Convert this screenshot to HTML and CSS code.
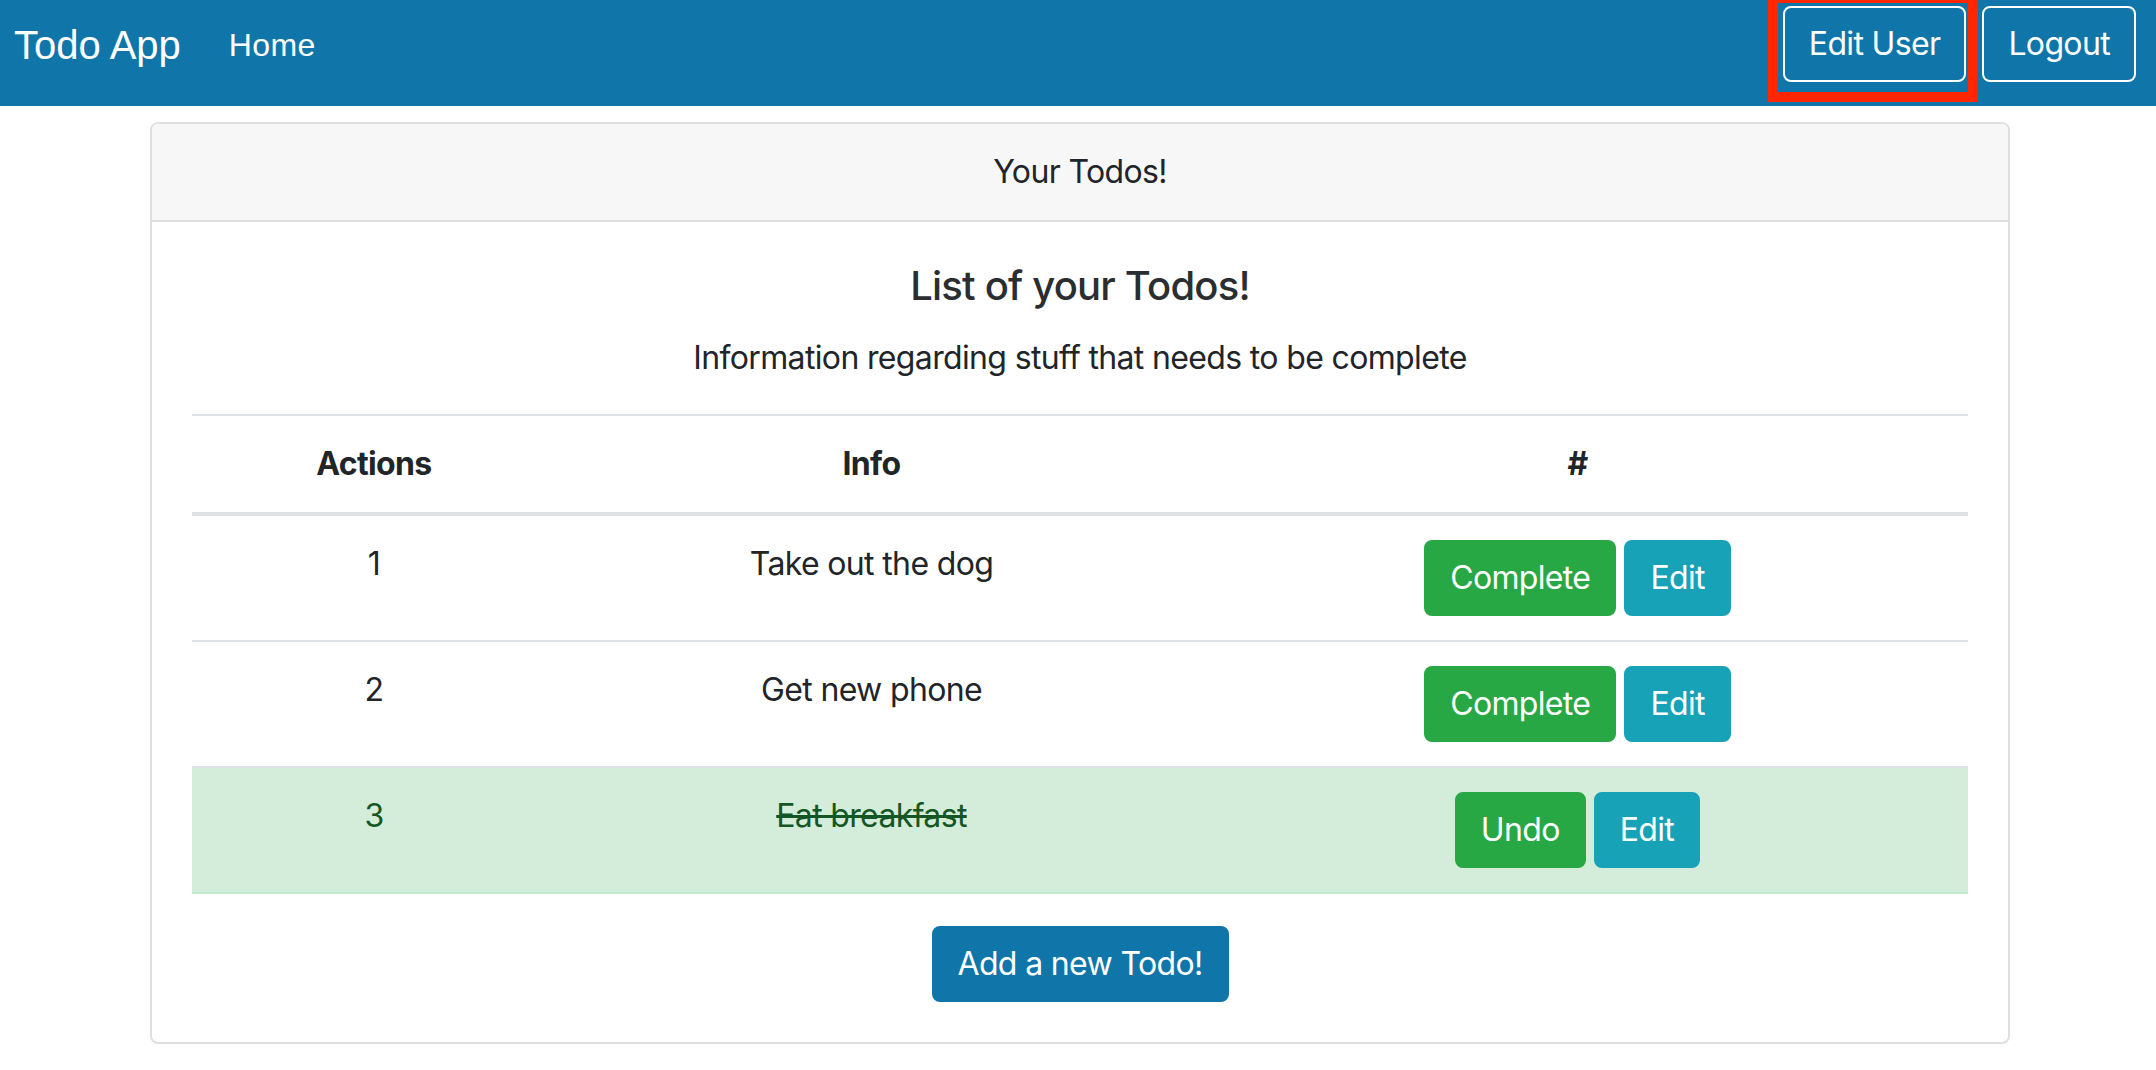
FILE: index.html
```html
<!DOCTYPE html>
<html lang="en">
<head>
<meta charset="utf-8">
<title>Todo App</title>
<link rel="stylesheet" href="styles.css">
</head>
<body>
<nav class="navbar">
  <div class="nav-left">
    <a class="brand" href="#">Todo App</a>
    <a class="nav-link" href="#">Home</a>
  </div>
  <div class="nav-right">
    <span class="annot-wrap">
      <button class="btn btn-outline">Edit User</button>
      <span class="annot"></span>
    </span>
    <button class="btn btn-outline">Logout</button>
  </div>
</nav>
<main class="container">
  <div class="card">
    <div class="card-header">Your Todos!</div>
    <div class="card-body">
      <h5 class="card-title">List of your Todos!</h5>
      <p class="card-text">Information regarding stuff that needs to be complete</p>
      <table class="table">
        <colgroup>
          <col class="col-a">
          <col class="col-b">
          <col class="col-c">
        </colgroup>
        <thead>
          <tr><th>Actions</th><th>Info</th><th>#</th></tr>
        </thead>
        <tbody>
          <tr>
            <td>1</td>
            <td>Take out the dog</td>
            <td><div class="actions"><button class="btn btn-success">Complete</button><button class="btn btn-info">Edit</button></div></td>
          </tr>
          <tr>
            <td>2</td>
            <td>Get new phone</td>
            <td><div class="actions"><button class="btn btn-success">Complete</button><button class="btn btn-info">Edit</button></div></td>
          </tr>
          <tr class="done">
            <td>3</td>
            <td><s>Eat breakfast</s></td>
            <td><div class="actions"><button class="btn btn-success">Undo</button><button class="btn btn-info">Edit</button></div></td>
          </tr>
        </tbody>
      </table>
      <div class="add-wrap"><button class="btn btn-primary">Add a new Todo!</button></div>
    </div>
  </div>
</main>
</body>
</html>
```
FILE: styles.css
```css
* { box-sizing: border-box; }
html, body { margin: 0; padding: 0; background: #fff; }
body {
  font-family: Inter, "Noto Sans", sans-serif;
  font-size: 32px;
  line-height: 48px;
  letter-spacing: -0.65px;
  color: #212529;
}
a { text-decoration: none; }

.navbar {
  display: flex;
  justify-content: space-between;
  align-items: flex-start;
  height: 106px;
  background: #1076aa;
  padding: 0 20px 0 14px;
}
.nav-left { display: flex; align-items: flex-start; }
.brand {
  font-family: "Liberation Sans", Arial, sans-serif;
  font-size: 40px;
  line-height: 60px;
  letter-spacing: 0;
  color: #fff;
  margin-top: 15px;
}
.nav-link {
  font-family: "Liberation Sans", Arial, sans-serif;
  font-size: 32px;
  line-height: 48px;
  letter-spacing: 0.4px;
  color: #fff;
  margin-top: 21px;
  margin-left: 48px;
}
.nav-right {
  display: flex;
  gap: 16px;
  padding-top: 6px;
}
.annot-wrap { position: relative; display: block; }
.annot {
  position: absolute;
  left: -15px;
  right: -12px;
  top: -13px;
  bottom: -20px;
  border: 10px solid #ff2600;
  pointer-events: none;
}

.btn {
  display: block;
  font-family: Inter, "Noto Sans", sans-serif;
  font-size: 32px;
  line-height: 48px;
  font-weight: 400;
  letter-spacing: -0.65px;
  padding: 12px 24px;
  border: 2px solid transparent;
  border-radius: 8px;
  color: #fff;
  background: transparent;
  margin: 0;
  cursor: pointer;
}
.btn-outline { border-color: #fff; }
.btn-success { background: #28a745; border-color: #28a745; }
.btn-info { background: #17a2b8; border-color: #17a2b8; }
.btn-primary { background: #1076aa; border-color: #1076aa; }

.container {
  width: 1860px;
  margin: 16px 0 0 150px;
}
.card {
  border: 2px solid #dfdfdf;
  border-radius: 8px;
  background: #fff;
}
.card-header {
  padding: 24px 40px;
  background: #f7f7f7;
  border-bottom: 2px solid #dfdfdf;
  border-radius: 6px 6px 0 0;
  text-align: center;
}
.card-body {
  padding: 40px;
  text-align: center;
}
.card-title {
  font-size: 40px;
  line-height: 48px;
  font-weight: 500;
  letter-spacing: -0.8px;
  color: #2b2e31;
  margin: 0 0 24px;
}
.card-text {
  margin: 0 0 32px;
}
.table {
  width: 100%;
  border-collapse: collapse;
  margin-bottom: 32px;
}
.col-a { width: 364px; }
.col-b { width: 631px; }
.col-c { width: 781px; }
.table th, .table td {
  padding: 24px;
  vertical-align: top;
  border-top: 2px solid #dee2e6;
  text-align: center;
}
.table thead th {
  vertical-align: bottom;
  border-bottom: 4px solid #dee2e6;
  font-weight: 700;
}
.table tr.done td {
  background: #d4edda;
  color: #155724;
  border-bottom: 2px solid #c3e6cb;
}
.actions {
  display: flex;
  justify-content: center;
  gap: 8px;
}
.add-wrap {
  display: flex;
  justify-content: center;
}
```
